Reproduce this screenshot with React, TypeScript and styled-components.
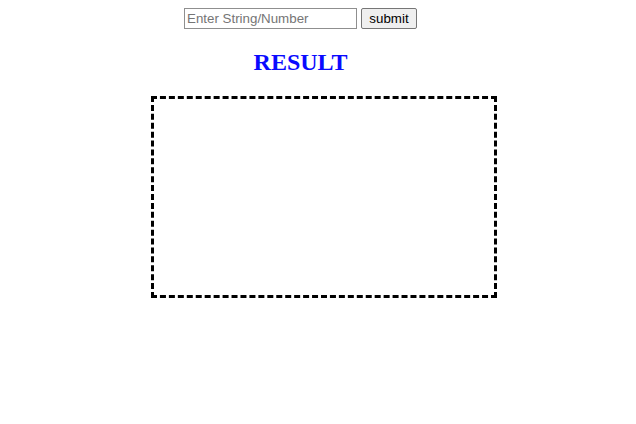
import React from "react";
import styled, { createGlobalStyle } from "styled-components";

const Global = createGlobalStyle`
  html, body { margin: 0; padding: 0; background: #fff; }
  body { margin: 8px; font-family: "Liberation Serif", "Times New Roman", serif; }
`;

const Page = styled.div`
  width: 585px;
  display: flex;
  flex-direction: column;
`;

const Form = styled.form`
  display: flex;
  align-items: center;
  gap: 4px;
  padding-left: 176px;
  height: 21px;
`;

const TextInput = styled.input`
  box-sizing: border-box;
  width: 173px;
  height: 21px;
  margin: 0;
  padding: 1px 2px;
  border: 1px solid #8f8f8f;
  border-radius: 0;
  font-family: "Liberation Sans", Arial, sans-serif;
  font-size: 13.33px;
  color: #000;
  outline: none;
  &::placeholder { color: #757575; }
`;

const SubmitButton = styled.button`
  box-sizing: border-box;
  width: 56px;
  height: 21px;
  margin: 0;
  padding: 1px 6px;
  border: 1px solid #767676;
  border-radius: 2px;
  background: #efefef;
  font-family: "Liberation Sans", Arial, sans-serif;
  font-size: 13.33px;
  color: #000;
`;

const Title = styled.h2`
  margin: 20px 0 20px;
  font-size: 24px;
  font-weight: bold;
  color: #0a0aff;
  text-align: center;
  font-family: "Liberation Serif", "Times New Roman", serif;
`;

const ResultBox = styled.div`
  margin-left: 143px;
  width: 340px;
  height: 196px;
  border: 3px dashed #000;
`;

export default function App() {
  return (
    <>
      <Global />
      <Page>
        <Form onSubmit={(e) => e.preventDefault()}>
          <TextInput type="text" placeholder="Enter String/Number" />
          <SubmitButton type="submit">submit</SubmitButton>
        </Form>
        <Title>RESULT</Title>
        <ResultBox />
      </Page>
    </>
  );
}
